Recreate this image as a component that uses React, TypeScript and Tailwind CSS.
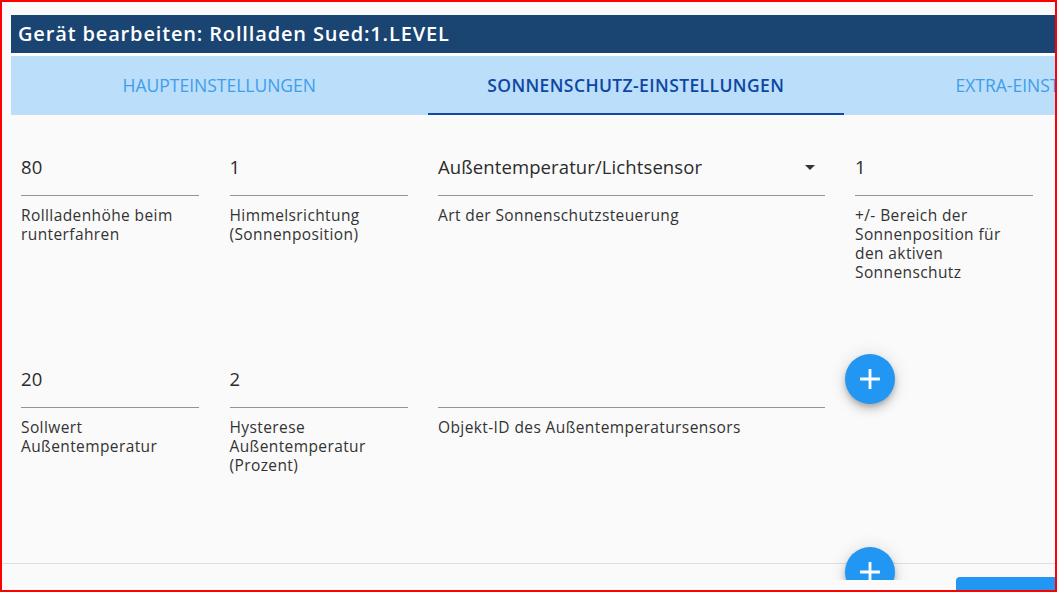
import React from "react";

type FieldProps = {
  value?: string;
  label: string;
  select?: boolean;
  wide?: boolean;
};

const Field = ({ value, label, select, wide }: FieldProps) => {
  return (
    <div className={`${wide ? "w-[417px]" : "w-[208.5px]"} shrink-0 pl-[10px] pr-[20.5px]`}>
      <div className="flex h-[49px] items-start justify-between border-b border-[#949494] pt-2">
        <span className="text-[18.5px] leading-6 tracking-[0.1px] text-[#2b2b2b]">{value}</span>
        {select && (
          <svg width="24" height="24" viewBox="0 0 24 24" className="mr-[3px] fill-[#333]">
            <path d="M7 10l5 5 5-5z" />
          </svg>
        )}
      </div>
      <div className="mt-[10px] text-[15.5px] leading-[19px] tracking-[0.4px] text-[#333]">{label}</div>
    </div>
  );
};

const Fab = () => (
  <div className="w-[208.5px] shrink-0">
    <button className="-mt-[5px] flex h-[50px] w-[50px] items-center justify-center rounded-full bg-[#2196f3] shadow-[0_3px_5px_-1px_rgba(0,0,0,0.2),0_6px_10px_0_rgba(0,0,0,0.14),0_1px_18px_0_rgba(0,0,0,0.12)]">
      <svg width="34" height="34" viewBox="0 0 24 24" className="fill-white">
        <path d="M19 13h-6v6h-2v-6H5v-2h6V5h2v6h6v2z" />
      </svg>
    </button>
  </div>
);

const tabs = ["Haupteinstellungen", "Sonnenschutz-Einstellungen", "Extra-Einstellungen"];

export default function App() {
  const active = 1;

  return (
    <div className="flex h-[592px] w-[1057px] flex-col overflow-hidden border-2 border-[#ff0000] bg-[#fafafa] font-['Open_Sans',sans-serif]">
      <div className="h-[13px] shrink-0" />

      {/* title bar */}
      <div className="ml-[9px] flex h-[38px] shrink-0 items-center bg-[#1a4472] pl-[7px] text-[20px] font-semibold tracking-[0.85px] whitespace-nowrap text-white">
        Gerät bearbeiten: Rollladen Sued:1.LEVEL
      </div>
      <div className="ml-[9px] h-[3px] shrink-0 bg-white" />

      {/* tabs */}
      <div className="ml-[9px] flex h-[59px] shrink-0 overflow-hidden bg-[#bbdefb]">
        {tabs.map((t, i) => (
          <div
            key={t}
            className={`relative flex w-[416.5px] shrink-0 items-center justify-center text-[17.5px] uppercase whitespace-nowrap ${
              i === active ? "font-semibold tracking-[0.4px] text-[#0d47a1]" : "text-[#3f9de9]"
            }`}
          >
            {t}
            {i === active && <div className="absolute bottom-0 left-0 right-0 h-[2px] bg-[#1448a8]" />}
          </div>
        ))}
      </div>

      {/* form */}
      <div className="relative h-[465px] shrink-0 overflow-hidden pl-[9px] pt-[32px]">
        <div className="absolute left-0 right-0 top-[448px] h-px bg-[#e0e0e0]" />

        <div className="relative mb-[77px] flex items-start">
          <Field value="80" label="Rollladenhöhe beim runterfahren" />
          <Field value="1" label="Himmelsrichtung (Sonnenposition)" />
          <Field value="Außentemperatur/Lichtsensor" label="Art der Sonnenschutzsteuerung" select wide />
          <Field value="1" label="+/- Bereich der Sonnenposition für den aktiven Sonnenschutz" />
        </div>

        <div className="relative mb-[77px] flex items-start">
          <Field value="20" label="Sollwert Außentemperatur" />
          <Field value="2" label="Hysterese Außentemperatur (Prozent)" />
          <Field label="Objekt-ID des Außentemperatursensors" wide />
          <Fab />
        </div>

        <div className="relative flex items-start pl-[834px]">
          <Fab />
        </div>
      </div>

      {/* actions */}
      <div className="-mt-[3px] flex min-h-0 flex-1 overflow-hidden">
        <button className="relative ml-[954px] h-[36px] w-[120px] shrink-0 rounded-[4px] bg-[#2196f3]" />
      </div>
    </div>
  );
}
